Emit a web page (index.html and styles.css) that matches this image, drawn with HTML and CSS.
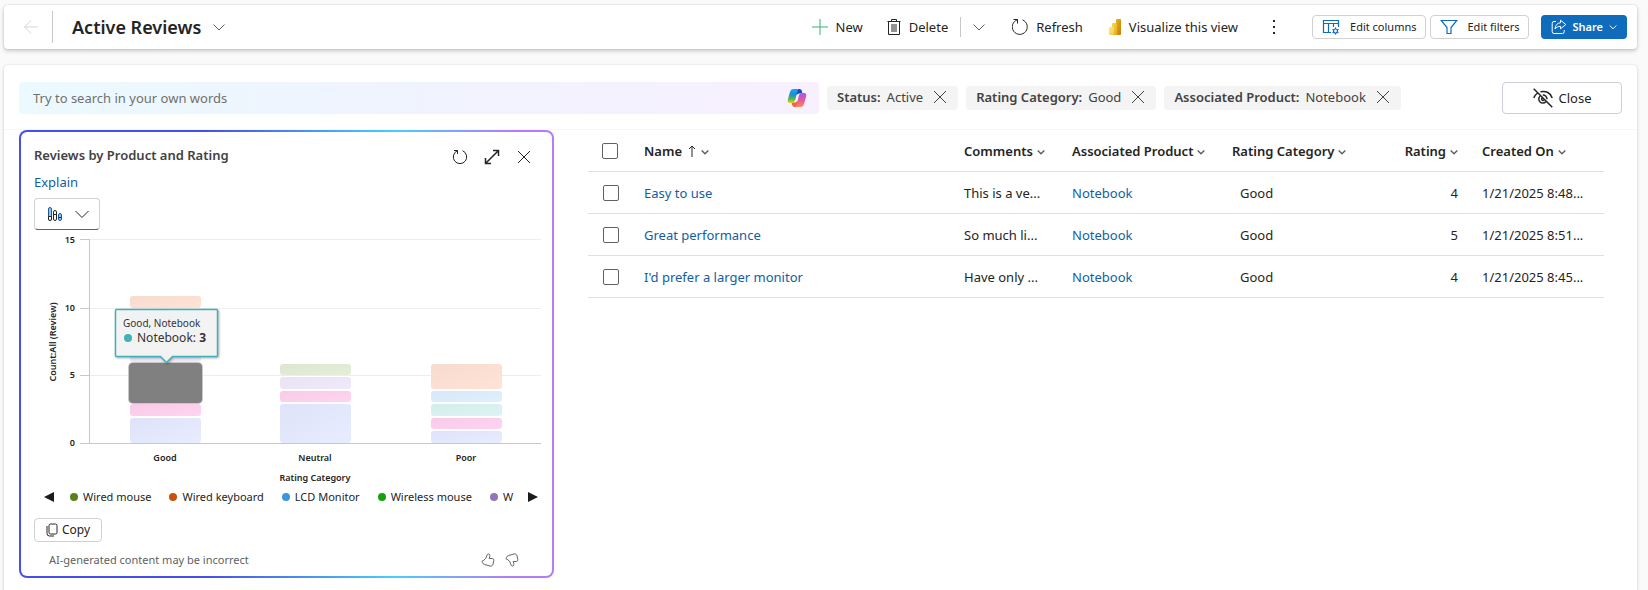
FILE: index.html
```html
<!DOCTYPE html>
<html lang="en">
<head>
<meta charset="utf-8">
<meta name="viewport" content="width=device-width, initial-scale=1">
<title>Active Reviews</title>
<link rel="stylesheet" href="styles.css">
</head>
<body>
<header class="bar">
  <button class="plain back" aria-label="Go back" disabled>
    <svg width="16" height="16" viewBox="0 0 16 16"><path d="M15 8H1.5M8 1.5 1.5 8 8 14.5"/></svg>
  </button>
  <button class="plain view">
    <span class="view-name">Active Reviews</span>
    <svg class="soft" width="12" height="12" viewBox="0 0 12 12"><path d="m.5 3.5 5.5 5.500 5.500-5.500"/></svg>
  </button>
  <div class="commands">
    <button class="plain command">
      <svg class="plus" width="16" height="16" viewBox="0 0 16 16"><path d="M8 0v16M0 8h16"/></svg>New
    </button>
    <button class="plain command delete">
      <svg width="14" height="16" viewBox="0 0 14 16"><path d="M.5 2.500h13M4.500 2.500v-2h5v2M1.500 2.500v13h11v-13M5 5v8M7 5v8M9 5v8"/></svg>Delete
    </button>
    <button class="plain split" aria-label="More delete options">
      <svg class="soft" width="12" height="12" viewBox="0 0 12 12"><path d="m.5 3.500 5.500 5.500 5.500-5.500"/></svg>
    </button>
    <button class="plain command refresh">
      <svg width="16" height="16" viewBox="0 0 16 16"><path d="M1.500.5h4v4M5.300.800A7.500 7.500 0 1 0 10.500.900"/></svg>Refresh
    </button>
    <button class="plain command visualize">
      <svg class="filled" width="12" height="16" viewBox="0 0 12 16">
        <defs>
          <linearGradient id="pb1" x1="0" y1="0" x2="1" y2="1"><stop offset="0" stop-color="#e9b21e"/><stop offset="1" stop-color="#c57f00"/></linearGradient>
          <linearGradient id="pb2" x1="0" y1="0" x2="1" y2="1"><stop offset="0" stop-color="#f8da51"/><stop offset="1" stop-color="#e0a91f"/></linearGradient>
          <linearGradient id="pb3" x1="0" y1="0" x2="1" y2="1"><stop offset="0" stop-color="#fbe989"/><stop offset="1" stop-color="#f4cc3c"/></linearGradient>
        </defs>
        <rect x="7" width="5" height="16" rx="1" fill="url(#pb1)"/>
        <rect x="3" y="4" width="5" height="12" rx="1" fill="url(#pb2)"/>
        <rect y="8" width="5" height="8" rx="1" fill="url(#pb3)"/>
      </svg>Visualize this view
    </button>
    <button class="plain more" aria-label="More commands">
      <svg class="filled" width="4" height="16" viewBox="0 0 4 16"><path fill="#242424" d="M1 1h2v2H1zM1 7h2v2H1zM1 13h2v2H1z"/></svg>
    </button>
    <div class="actions">
      <button class="outline small">
        <svg class="blue" width="18" height="16" viewBox="0 0 18 16"><path d="M9 13.500H1.500V1.500h15V8M1.500 4.500h15M6.500 4.500v9M11.500 4.500V8"/><circle cx="13.500" cy="12" r="2"/><path d="M13.500 8.500V10M13.500 14v1.500M10.500 10.200l1.300.8M15.200 13l1.300.8M10.500 13.800l1.300-.8M15.200 11l1.300-.8"/></svg>Edit columns
      </button>
      <button class="outline small filters">
        <svg class="blue" width="18" height="16" viewBox="0 0 18 16"><path d="M1.200 1.500h15.600L11 8.500v6H7v-6z"/></svg>Edit filters
      </button>
      <button class="share">
        <svg width="16" height="16" viewBox="0 0 16 16"><path d="M5 2.500H3A1.800 1.800 0 0 0 1.200 4.300v8.400A1.800 1.800 0 0 0 3 14.500h8.400a1.800 1.800 0 0 0 1.800-1.800V11"/><path d="M9.500 1.200 14.800 5.500 9.500 9.800V7.400C7 7.300 5.300 8.300 4 10c.3-3.500 2-6 5.500-6.300z"/></svg>Share
        <svg width="8" height="8" viewBox="0 0 8 8"><path d="m.7 2.500 3.300 3.300 3.300-3.300"/></svg>
      </button>
    </div>
  </div>
</header>

<main class="panel">
  <div class="filter-row">
    <label class="search">
      <input type="search" aria-label="Search" placeholder="Try to search in your own words">
      <svg class="filled" width="20" height="20" viewBox="0 0 20 20">
        <defs>
          <linearGradient id="cp1" x1="0" y1="0" x2="0" y2="1"><stop offset="0" stop-color="#1aa5f0"/><stop offset=".4" stop-color="#1c8fd0"/><stop offset=".7" stop-color="#53b555"/><stop offset="1" stop-color="#e8d320"/></linearGradient>
          <linearGradient id="cp2" x1="0" y1="0" x2="0" y2="1"><stop offset="0" stop-color="#a259e8"/><stop offset=".5" stop-color="#e8569c"/><stop offset="1" stop-color="#fb8a52"/></linearGradient>
        </defs>
        <path fill="#1748c7" d="M8 1h4.500c1.300 0 1.900.7 2.300 1.900L15.500 5.500H12L9 7z"/>
        <path fill="#f2643d" d="M12 19H7.500c-1.300 0-1.900-.7-2.300-1.900L4.500 14.500H8l3-1.500z"/>
        <path fill="url(#cp1)" d="M6.500 1h5.800c-1.100.2-1.500 1.200-1.900 2.500L8.300 11.800C7.800 13.800 6.500 15 4.500 15H3c-2 0-2.700-1.500-2.200-3.300L3 4c.6-2 1.600-3 3.500-3z"/>
        <path fill="url(#cp2)" d="M13.500 19H7.700c1.100-.2 1.500-1.200 1.900-2.500l2.100-8.300C12.200 6.200 13.500 5 15.500 5H17c2 0 2.700 1.500 2.200 3.300L17 16c-.6 2-1.600 3-3.500 3z"/>
      </svg>
    </label>
    <ul class="chips">
      <li class="chip"><b>Status:</b>Active<button class="plain" aria-label="Remove Status filter"><svg width="12" height="12" viewBox="0 0 12 12"><path d="m0 0 12 12M12 0 0 12"/></svg></button></li>
      <li class="chip"><b>Rating Category:</b>Good<button class="plain" aria-label="Remove Rating Category filter"><svg width="12" height="12" viewBox="0 0 12 12"><path d="m0 0 12 12M12 0 0 12"/></svg></button></li>
      <li class="chip"><b>Associated Product:</b>Notebook<button class="plain" aria-label="Remove Associated Product filter"><svg width="12" height="12" viewBox="0 0 12 12"><path d="m0 0 12 12M12 0 0 12"/></svg></button></li>
    </ul>
    <button class="outline close">
      <svg class="eye" width="20" height="20" viewBox="0 0 20 20"><path d="m.7.700 18.600 18.600M.8 10c.8-2.300 2-3.800 3.800-5M7.500 3.800C13 2.500 17.800 5 19.200 10M7 8.200a4 4 0 1 0 5.800 5.500M9.800 7a4 4 0 0 1 4.200 4.200M9 10a1.500 1.500 0 0 0 2 2.200"/></svg>Close
    </button>
  </div>

  <div class="content">
    <section class="card">
      <div class="card-head">
        <h2>Reviews by Product and Rating</h2>
        <div class="card-tools">
          <button class="plain" aria-label="Refresh chart"><svg width="16" height="16" viewBox="0 0 16 16"><path d="M2 1.500h3.500V5M5.500 1.700A6.700 6.700 0 1 0 10.500 1.700"/></svg></button>
          <button class="plain" aria-label="Expand chart"><svg class="medium" width="16" height="16" viewBox="0 0 16 16"><path d="M1.500 14.500 14.500 1.500M9 1.500h5.500V7M1.500 9v5.500H7"/></svg></button>
          <button class="plain" aria-label="Close chart"><svg width="16" height="16" viewBox="0 0 16 16"><path d="m2 2 12 12M14 2 2 14"/></svg></button>
        </div>
      </div>
      <a class="explain" href="#explain">Explain</a>
      <button class="outline chart-type" aria-label="Chart type" aria-haspopup="listbox">
        <svg width="16" height="16" viewBox="0 0 16 16"><g fill="#8fc4f5" stroke="#1c5a9c"><rect x="1.500" y="1.500" width="3" height="13" rx="1.500"/><rect x="11.500" y="7.500" width="3" height="7" rx="1.500"/></g><rect x="6.500" y="4.500" width="3" height="10" rx="1.500"/><path d="M1.500 10.500h3M6.500 8.500h3M11.500 11.500h3"/><path fill="#fff" d="M1.500 10.500h3V13a1.500 1.500 0 0 1-3 0z"/></svg>
        <svg width="14" height="14" viewBox="0 0 14 14"><path d="m.5 4 6.500 6.500L13.500 4"/></svg>
      </button>

      <svg class="chart" viewBox="0 0 531 256" role="img" aria-label="Count of reviews by rating category and product">
        <defs>
          <linearGradient id="lav" x1="0" y1="0" x2="1" y2="1"><stop offset="0" stop-color="#dfe3f9"/><stop offset="1" stop-color="#e7ecff"/></linearGradient>
          <linearGradient id="pink" x1="0" y1="0" x2="1" y2="1"><stop offset="0" stop-color="#f8cbe8"/><stop offset="1" stop-color="#ffd3f1"/></linearGradient>
          <linearGradient id="orange" x1="0" y1="0" x2="1" y2="1"><stop offset="0" stop-color="#f6dbcf"/><stop offset="1" stop-color="#ffe3d6"/></linearGradient>
          <linearGradient id="purple" x1="0" y1="0" x2="1" y2="1"><stop offset="0" stop-color="#e9e3f4"/><stop offset="1" stop-color="#f1e9fb"/></linearGradient>
          <linearGradient id="green" x1="0" y1="0" x2="1" y2="1"><stop offset="0" stop-color="#dde6d1"/><stop offset="1" stop-color="#e4eed8"/></linearGradient>
          <linearGradient id="sky" x1="0" y1="0" x2="1" y2="1"><stop offset="0" stop-color="#d7e8f8"/><stop offset="1" stop-color="#def0fe"/></linearGradient>
          <linearGradient id="teal" x1="0" y1="0" x2="1" y2="1"><stop offset="0" stop-color="#d4ecec"/><stop offset="1" stop-color="#dcf5f4"/></linearGradient>
        </defs>
        <g class="grid"><path d="M68 8.500h452M68 77.500h452M68 144.500h452"/></g>
        <g class="bars">
          <rect x="109" y="65" width="71" height="12" rx="3" fill="url(#orange)"/>
          <rect x="109" y="79" width="71" height="24" rx="3" fill="url(#sky)"/>
          <rect x="109" y="105" width="71" height="12" rx="3" fill="url(#green)"/>
          <rect x="109" y="119" width="71" height="12" rx="3" fill="url(#purple)"/>
          <rect x="109" y="173" width="71" height="12" rx="3" fill="url(#pink)"/>
          <rect x="109" y="187" width="71" height="25" rx="3" fill="url(#lav)"/>
          <rect x="259" y="133" width="71" height="11" rx="3" fill="url(#green)"/>
          <rect x="259" y="146" width="71" height="12" rx="3" fill="url(#purple)"/>
          <rect x="259" y="160" width="71" height="11" rx="3" fill="url(#pink)"/>
          <rect x="259" y="173" width="71" height="39" rx="3" fill="url(#lav)"/>
          <rect x="410" y="133" width="71" height="25" rx="3" fill="url(#orange)"/>
          <rect x="410" y="160" width="71" height="11" rx="3" fill="url(#sky)"/>
          <rect x="410" y="173" width="71" height="12" rx="3" fill="url(#teal)"/>
          <rect x="410" y="187" width="71" height="11" rx="3" fill="url(#pink)"/>
          <rect x="410" y="200" width="71" height="12" rx="3" fill="url(#lav)"/>
          <rect x="107" y="131" width="75" height="42" rx="5" fill="#c8c8c8"/>
          <rect x="108" y="132" width="73" height="40" rx="4" fill="#808080"/>
        </g>
        <g class="axis"><path d="M68.500 8v205M59 8.500h9M59 77.500h9M59 144.500h9M59 212.500h461"/></g>
        <g class="tick end"><text x="54" y="12">15</text><text x="54" y="80">10</text><text x="54" y="147">5</text><text x="54" y="215">0</text></g>
        <g class="tick mid"><text x="144" y="230">Good</text><text x="294" y="230">Neutral</text><text x="445" y="230">Poor</text><text x="294" y="250">Rating Category</text><text transform="translate(35 111) rotate(-90)">Count:All (Review)</text></g>
        <g class="tip">
          <path class="tip-box" d="M95.500 78.500h100a1 1 0 0 1 1 1v45a1 1 0 0 1-1 1h-44l-6 6-6-6h-44a1 1 0 0 1-1-1v-45a1 1 0 0 1 1-1z"/>
          <text class="tip-title" x="102" y="96">Good, Notebook</text>
          <circle cx="107" cy="107" r="4" fill="#3fb1b8"/>
          <text class="tip-value" x="116" y="111">Notebook: <tspan class="strong">3</tspan></text>
        </g>
      </svg>

      <div class="legend">
        <button class="plain" aria-label="Previous legend items"><svg class="filled" width="10" height="10" viewBox="0 0 10 10"><path fill="#1b1b1b" d="M10 0v10L0 5z"/></svg></button>
        <ul>
          <li><i class="dot wired-mouse"></i>Wired mouse</li>
          <li><i class="dot keyboard"></i>Wired keyboard</li>
          <li><i class="dot monitor"></i>LCD Monitor</li>
          <li><i class="dot wireless"></i>Wireless mouse</li>
          <li><i class="dot webcam"></i>W</li>
        </ul>
        <button class="plain" aria-label="Next legend items"><svg class="filled" width="10" height="10" viewBox="0 0 10 10"><path fill="#1b1b1b" d="M0 0v10l10-5z"/></svg></button>
      </div>

      <button class="outline small copy">
        <svg width="12" height="14" viewBox="0 0 12 14"><rect x="3" y="1" width="8" height="10" rx="1.500"/><path d="M1 3v7.500A2.500 2.500 0 0 0 3.500 13H8"/></svg>Copy
      </button>
      <div class="card-foot">
        <span>AI-generated content may be incorrect</span>
        <button class="plain" aria-label="Like"><svg width="14" height="14" viewBox="0 0 14 14"><path d="M7.500 1c1.500 0 1.700 1.700.8 4.500h2.900c1.300 0 1.800 1 1.600 2.200l-.8 3.500c-.4 1.600-1.600 2.200-3.100 1.800L3.500 11.400C2.400 11 1.700 10.500 1.400 9.500L1 8.200C3.500 7.600 5.600 4.500 6 2.200 6.200 1.400 6.700 1 7.500 1z"/></svg></button>
        <button class="plain" aria-label="Dislike"><svg width="14" height="14" viewBox="0 0 14 14"><path d="M7.500 13c1.500 0 1.700-1.700.8-4.500h2.900c1.300 0 1.800-1 1.600-2.200L12 2.800C11.600 1.200 10.400.600 8.900 1L3.500 2.600C2.400 3 1.700 3.500 1.400 4.500L1 5.800C3.500 6.400 5.600 9.500 6 11.800c.2.800.7 1.200 1.500 1.200z"/></svg></button>
      </div>
    </section>

    <table class="records">
      <colgroup><col class="c-check"><col><col class="c-comments"><col class="c-product"><col class="c-category"><col class="c-rating"><col class="c-created"></colgroup>
      <thead>
        <tr>
          <th><input type="checkbox" aria-label="Select all rows"></th>
          <th>Name<svg class="sort" width="8" height="12" viewBox="0 0 8 12"><path d="M4 12V1M1 4l3-3 3 3"/></svg><svg class="caret" width="8" height="8" viewBox="0 0 8 8"><path d="m.7 2.500 3.300 3.300 3.300-3.300"/></svg></th>
          <th>Comments<svg class="caret" width="8" height="8" viewBox="0 0 8 8"><path d="m.7 2.500 3.300 3.300 3.300-3.300"/></svg></th>
          <th>Associated Product<svg class="caret" width="8" height="8" viewBox="0 0 8 8"><path d="m.7 2.500 3.300 3.300 3.300-3.300"/></svg></th>
          <th>Rating Category<svg class="caret" width="8" height="8" viewBox="0 0 8 8"><path d="m.7 2.500 3.300 3.300 3.300-3.300"/></svg></th>
          <th class="num">Rating<svg class="caret" width="8" height="8" viewBox="0 0 8 8"><path d="m.7 2.500 3.300 3.300 3.300-3.300"/></svg></th>
          <th>Created On<svg class="caret" width="8" height="8" viewBox="0 0 8 8"><path d="m.7 2.500 3.300 3.300 3.300-3.300"/></svg></th>
        </tr>
      </thead>
      <tbody>
        <tr><td><input type="checkbox" aria-label="Select Easy to use"></td><td><a href="#r1">Easy to use</a></td><td>This is a ve...</td><td><a href="#p1">Notebook</a></td><td class="choice">Good</td><td class="num">4</td><td>1/21/2025 8:48...</td></tr>
        <tr><td><input type="checkbox" aria-label="Select Great performance"></td><td><a href="#r2">Great performance</a></td><td>So much li...</td><td><a href="#p1">Notebook</a></td><td class="choice">Good</td><td class="num">5</td><td>1/21/2025 8:51...</td></tr>
        <tr><td><input type="checkbox" aria-label="Select I'd prefer a larger monitor"></td><td><a href="#r3">I'd prefer a larger monitor</a></td><td>Have only ...</td><td><a href="#p1">Notebook</a></td><td class="choice">Good</td><td class="num">4</td><td>1/21/2025 8:45...</td></tr>
      </tbody>
    </table>
  </div>
</main>
</body>
</html>
```
FILE: styles.css
```css
* { box-sizing: border-box; }

body {
  margin: 0;
  min-height: 100vh;
  padding: 5px 11px 0 4px;
  display: flex;
  flex-direction: column;
  gap: 16px;
  background: #fafafa;
  color: #242424;
  font: 13px/20px "Noto Sans", "Open Sans", sans-serif;
}

svg { flex: none; fill: none; stroke: currentColor; }
svg.filled, .chart { stroke: none; }
svg.medium, svg.eye { stroke-width: 1.5; }
svg.blue { color: #0f6cbd; stroke-width: 1.2; }
svg.soft { color: #616161; }

ul { margin: 0; padding: 0; list-style: none; }
a { color: #115ea3; text-decoration: none; }

button { font: inherit; color: inherit; white-space: nowrap; display: flex; align-items: center; }
.plain { border: 0; padding: 0; background: none; }
.outline { border: 1px solid #d1d1d1; border-radius: 4px; background: #fff; }
.small { height: 24px; font-size: 12px; }

/* Command bar */
.bar {
  height: 44px;
  padding-right: 10px;
  display: flex;
  align-items: center;
  background: #fff;
  border-radius: 4px;
  box-shadow: 0 0 2px rgba(0, 0, 0, .14), 0 2px 4px rgba(0, 0, 0, .2);
}
.back { width: 49px; height: 32px; padding-left: 19px; border-right: 1px solid #c8c8c8; color: #d6d6d6; }
.view { padding-left: 19px; gap: 12px; }
.view-name { font-size: 18px; line-height: 28px; font-weight: 600; }
.commands { display: flex; align-items: center; margin-left: auto; }
.command { gap: 8px; }
.plus { color: #3bb273; }
.delete { margin-left: 24px; }
.split { margin-left: 12px; height: 20px; padding-left: 12px; border-left: 1px solid #c8c8c8; }
.refresh { margin-left: 27px; }
.visualize { margin-left: 26px; }
.more { margin-left: 34px; }
.actions { display: flex; gap: 4px; margin-left: 36px; }
.actions .outline { padding: 0 8px 0 9px; gap: 10px; font-size: 11px; }
.share {
  height: 24px;
  margin-left: 8px;
  padding: 0 10px;
  gap: 6px;
  border: 0;
  border-radius: 4px;
  background: #0f6cbd;
  color: #fff;
  font-size: 11px;
  font-weight: 600;
}

/* Main panel */
.panel {
  flex: 1;
  background: #fff;
  border-radius: 4px 4px 0 0;
  box-shadow: 0 0 2px rgba(0, 0, 0, .14), 0 2px 4px rgba(0, 0, 0, .12);
}
.filter-row {
  display: flex;
  align-items: center;
  padding: 17px 15px 15px;
  border-bottom: 1px solid #f7f7f7;
}
.search {
  flex: 0 1 800px;
  height: 32px;
  display: flex;
  align-items: center;
  padding: 0 12px 0 14px;
  border-radius: 4px;
  background: linear-gradient(90deg, #ebfaff, #f0f3fe 50%, #f8f0fe);
}
.search input { flex: 1; min-width: 0; padding: 0; border: 0; outline: 0; background: none; font: inherit; color: inherit; }
.search input::placeholder { color: #707070; opacity: 1; }
.chips { display: flex; gap: 8px; margin-left: 8px; }
.chip {
  height: 24px;
  display: flex;
  align-items: center;
  padding: 0 12px 2px 10px;
  border-radius: 4px;
  background: #f4f4f4;
  color: #424242;
  white-space: nowrap;
}
.chip b { font-weight: 600; margin-right: 6px; }
.chip .plain { margin-left: 11px; }
.close { width: 120px; height: 32px; margin-left: auto; justify-content: center; gap: 6px; border-color: #cfcde0; }

.content { display: flex; align-items: flex-start; padding: 0 33px 6px 15px; }

/* Chart card */
.card {
  flex: 0 0 535px;
  border: 2px solid transparent;
  border-radius: 8px;
  background:
    linear-gradient(#fff, #fff) padding-box,
    linear-gradient(90deg, #464feb 35%, #47cffa 70%, #b47cf8 92%) border-box;
}
.card-head { display: flex; align-items: flex-start; padding: 13px 20px 0 13px; }
.card h2 { margin: 0; font-size: 13px; line-height: 20px; font-weight: 600; color: #424242; }
.card-tools { display: flex; gap: 16px; margin-left: auto; padding: 4px 0; }
.explain { display: block; width: max-content; margin: 3px 13px 6px; }
.chart-type {
  width: 66px;
  height: 32px;
  margin-left: 13px;
  padding: 0 10px 0 12px;
  justify-content: space-between;
  border-bottom-color: #616161;
}
.chart { display: block; width: 100%; margin-top: 1px; }
.grid { stroke: #ededed; }
.axis { stroke: #c8c8c8; }
.tick { font-size: 9px; font-weight: 600; fill: #242424; }
.end { text-anchor: end; }
.mid { text-anchor: middle; }
.tip-box { fill: rgba(247, 247, 247, .93); stroke: #3fb1b8; stroke-width: 1.5; filter: drop-shadow(1px 1px 1px rgba(0, 0, 0, .3)); }
.tip-title { font-size: 10px; fill: #333; }
.tip-value { font-size: 12px; fill: #333; }
.strong { font-weight: 700; }

.legend { display: flex; align-items: center; height: 20px; padding: 0 14px 0 23px; font-size: 11px; }
.legend ul { flex: 1; display: flex; gap: 18px; margin-left: 16px; }
.legend li { display: flex; align-items: center; gap: 5px; white-space: nowrap; }
.dot { width: 8px; height: 8px; border-radius: 50%; }
.wired-mouse { background: #57811b; }
.keyboard { background: #ca5010; }
.monitor { background: #3a96dd; }
.wireless { background: #13a10e; }
.webcam { background: #9373c0; }

.copy { margin: 11px 0 0 13px; padding: 0 11px; gap: 4px; }
.card-foot { display: flex; align-items: center; gap: 10px; padding: 8px 33px 6px 28px; color: #616161; font-size: 11px; }
.card-foot span { flex: 1; }

/* Records */
.records { flex: 1; margin-left: 34px; border-collapse: separate; border-spacing: 0; table-layout: fixed; }
.c-check { width: 44px; }
.c-comments { width: 108px; }
.c-product { width: 160px; }
.c-category { width: 143px; }
.c-rating { width: 107px; }
.c-created { width: 134px; }
.records th, .records td {
  height: 42px;
  padding: 0 0 0 12px;
  border-bottom: 1px solid #e0e0e0;
  text-align: left;
  white-space: nowrap;
}
.records th { font-weight: 600; }
.records th:first-child { padding-left: 14px; }
.records td:first-child { padding-left: 15px; }
.records .choice { padding-left: 20px; }
.records .num { text-align: right; padding-right: 12px; }
.caret { margin-left: 4px; stroke-width: 1.5; color: #616161; }
.sort { margin-left: 6px; vertical-align: -1px; }
.sort + .caret { margin-left: 5px; }
.records input {
  appearance: none;
  display: block;
  width: 16px;
  height: 16px;
  margin: 0;
  border: 1px solid #616161;
  border-radius: 2px;
  background: #fff;
}
```
